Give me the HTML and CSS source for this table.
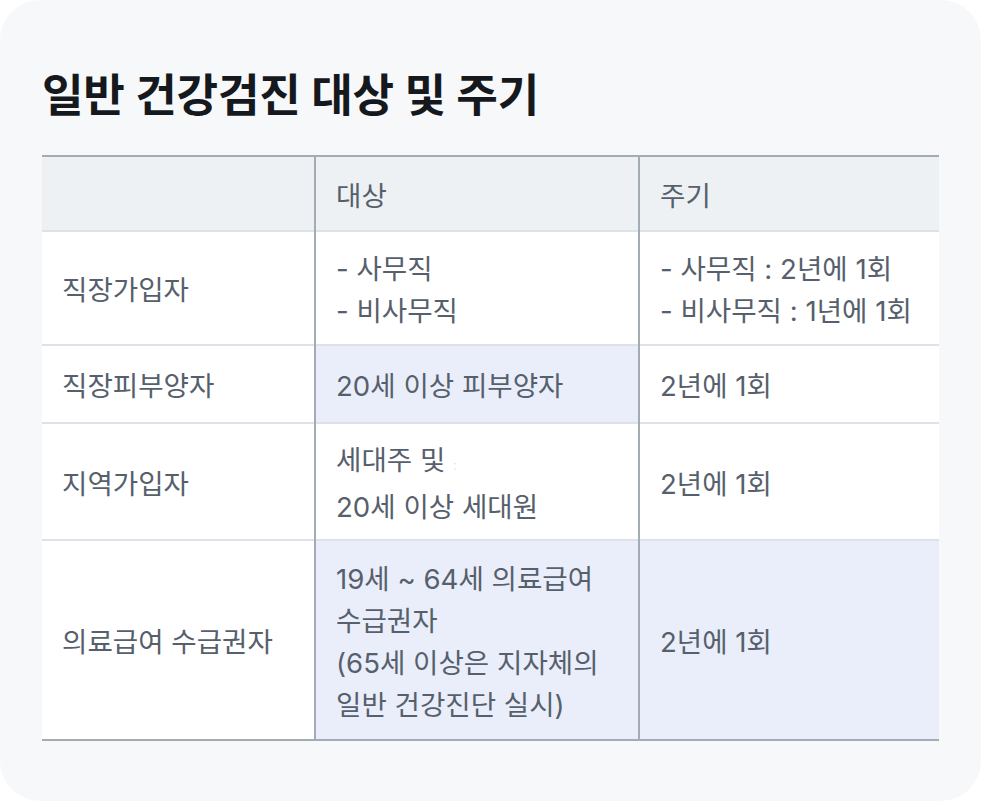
FILE: index.html
```html
<!DOCTYPE html>
<html lang="ko">
<head>
<meta charset="utf-8">
<link rel="stylesheet" href="styles.css">
</head>
<body>
<div class="card">
  <h1 class="title">일반 건강검진 대상 및 주기</h1>
  <table class="tbl">
    <colgroup>
      <col class="c1"><col class="c2"><col class="c3">
    </colgroup>
    <thead>
      <tr class="r-head"><th></th><th class="vb">대상</th><th class="vb">주기</th></tr>
    </thead>
    <tbody>
      <tr class="r1">
        <td>직장가입자</td>
        <td class="vb">- 사무직<br>- 비사무직</td>
        <td class="vb">- 사무직 : 2년에 1회<br>- 비사무직 : 1년에 1회</td>
      </tr>
      <tr class="r2">
        <td>직장피부양자</td>
        <td class="vb hl">20세 이상 피부양자</td>
        <td class="vb">2년에 1회</td>
      </tr>
      <tr class="r3">
        <td>지역가입자</td>
        <td class="vb">세대주 및 <span class="ghost">:</span><br>20세 이상 세대원</td>
        <td class="vb">2년에 1회</td>
      </tr>
      <tr class="r4">
        <td>의료급여 수급권자</td>
        <td class="vb hl">19세 ~ 64세 의료급여<br>수급권자<br>(65세 이상은 지자체의<br>일반 건강진단 실시)</td>
        <td class="vb hl">2년에 1회</td>
      </tr>
    </tbody>
  </table>
</div>
</body>
</html>
```
FILE: styles.css
```css
html, body {
  margin: 0;
  padding: 0;
  background: #ffffff;
}
body {
  font-family: "Inter", "Noto Sans CJK KR", "Noto Sans", sans-serif;
}
.card {
  width: 981px;
  height: 801px;
  box-sizing: border-box;
  background: #f7f8fa;
  border-radius: 40px;
  padding: 66px 42px 0 42px;
}
.title {
  margin: 0;
  font-size: 45.2px;
  line-height: 60px;
  font-weight: 700;
  color: #15181c;
  letter-spacing: -0.2px;
}
.tbl {
  margin-top: 29px;
  width: 897px;
  border-collapse: collapse;
  table-layout: fixed;
  border-top: 2px solid #a3abb5;
  border-bottom: 2px solid #a3abb5;
}
.c1 { width: 273px; }
.c2 { width: 324px; }
.c3 { width: 300px; }
.tbl th, .tbl td {
  text-align: left;
  vertical-align: middle;
  padding: 4px 20px 0 20px;
  font-size: 27.6px;
  line-height: 42px;
  font-weight: 400;
  color: #56606c;
  background: #ffffff;
  border-top: 2px solid #dee2e8;
  white-space: nowrap;
}
.tbl th {
  background: #eef1f4;
  border-top: none;
}
.tbl .vb { border-left: 2px solid #a3abb5; }
.tbl .hl { background: #e9eefa; }
.r-head { height: 75px; }
.r1 { height: 114px; }
.r2 { height: 78px; }
.r3 { height: 117px; }
.r4 { height: 200px; }
.ghost { color: #e6e8ec; font-size: 14px; }
```
